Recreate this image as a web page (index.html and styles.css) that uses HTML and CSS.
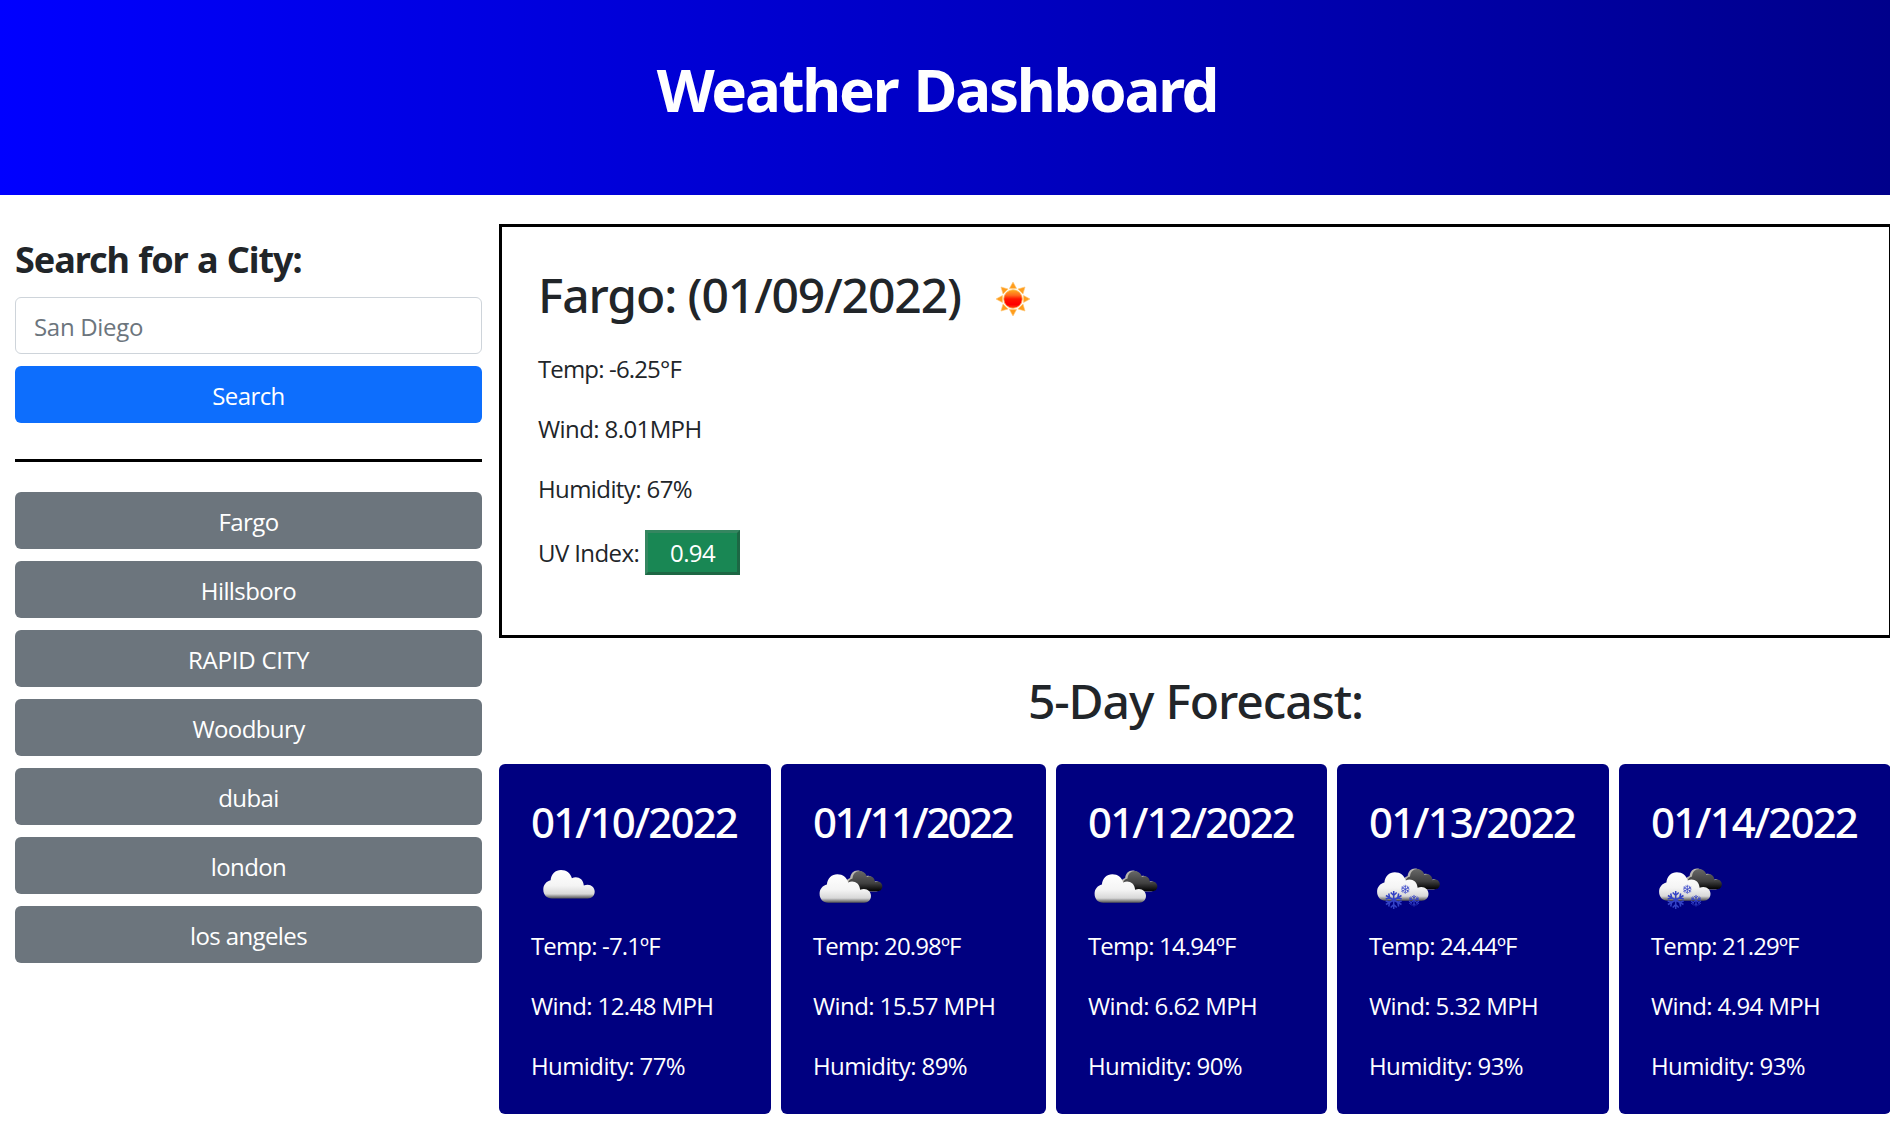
FILE: index.html
```html
<!DOCTYPE html>
<html lang="en">
<head>
<meta charset="utf-8">
<title>Weather Dashboard</title>
<link rel="stylesheet" href="styles.css">
</head>
<body>
<svg class="defs" width="0" height="0" aria-hidden="true">
  <defs>
    <linearGradient id="light" x1="0" y1="0" x2="0" y2="1">
      <stop offset="0" stop-color="#fff"/><stop offset=".55" stop-color="#f4f4f4"/><stop offset=".84" stop-color="#d8d8d8"/><stop offset=".93" stop-color="#8c8c8c"/><stop offset="1" stop-color="#555"/>
    </linearGradient>
    <linearGradient id="dark" x1="0" y1="0" x2="0" y2="1">
      <stop offset="0" stop-color="#686868"/><stop offset=".6" stop-color="#404040"/><stop offset="1" stop-color="#000"/>
    </linearGradient>
    <linearGradient id="disc" x1="0" y1="0" x2="0" y2="1">
      <stop offset="0" stop-color="#ffb020"/><stop offset=".3" stop-color="#ff6a1c"/><stop offset=".5" stop-color="#ff1500"/><stop offset=".8" stop-color="#f00"/><stop offset="1" stop-color="#ff4a10"/>
    </linearGradient>
    <path id="cloud" d="M21 48.5C15.500 48.500 12.300 44.800 12.300 39.600C12.300 34.500 15.500 31.400 19.600 30.300C20.200 24 24.500 20 30 20C35.600 20 39.700 23.500 40.900 28.200C45.500 25.600 52.500 28 52.800 35.600C58.800 33 63.700 37 63.700 41.500C63.700 45.500 61 48.500 56.800 48.500Z"/>
    <g id="flake" fill="none" stroke="#3342c6" stroke-width="1.500">
      <path d="M0-9V9M-7.800-4.500L7.800 4.500M-7.800 4.500L7.800-4.500M-3-7.500L0-4.500L3-7.500M-3 7.500L0 4.500L3 7.500M-8-1L-4-2.200L-5-6.500M8 1L4 2.200L5 6.500M8-1L4-2.200L5-6.500M-8 1L-4 2.200L-5 6.500"/>
    </g>
    <g id="cloudy">
      <use href="#cloud" fill="#b9b6b0" transform="translate(23.400 5.600) scale(.7 .74)"/>
      <use href="#cloud" fill="url(#dark)" transform="translate(26.300 6.900) scale(.675 .71)"/>
      <use href="#cloud" fill="url(#light)" transform="translate(-5.700 4.200)"/>
    </g>
  </defs>
</svg>

<header class="banner"><h1>Weather Dashboard</h1></header>

<div class="layout">
  <aside class="sidebar">
    <h2>Search for a City:</h2>
    <input class="field" type="text" placeholder="San Diego" aria-label="City">
    <button class="btn primary">Search</button>
    <hr>
    <div class="history">
      <button class="btn">Fargo</button>
      <button class="btn">Hillsboro</button>
      <button class="btn caps">RAPID CITY</button>
      <button class="btn">Woodbury</button>
      <button class="btn">dubai</button>
      <button class="btn">london</button>
      <button class="btn">los angeles</button>
    </div>
  </aside>

  <main class="main">
    <section class="current">
      <div class="place">
        <h2>Fargo: (01/09/2022)</h2>
        <svg class="sun" viewBox="-18 -18 36 36" aria-hidden="true">
          <g fill="#ff9d1c" stroke="#ffc878" stroke-width=".6">
            <path id="ray" d="M-3.600-10.500L0-17L3.600-10.500Z"/>
            <use href="#ray" transform="rotate(45)"/><use href="#ray" transform="rotate(90)"/><use href="#ray" transform="rotate(135)"/><use href="#ray" transform="rotate(180)"/><use href="#ray" transform="rotate(225)"/><use href="#ray" transform="rotate(270)"/><use href="#ray" transform="rotate(315)"/>
          </g>
          <circle r="9.300" fill="url(#disc)" stroke="#ffc060" stroke-width=".8"/>
        </svg>
      </div>
      <p class="temp">Temp: -6.25°F</p>
      <p class="wind">Wind: 8.01MPH</p>
      <p class="hum">Humidity: 67%</p>
      <p class="uv">UV Index: <span class="badge">0.94</span></p>
    </section>

    <h2 class="title">5-Day Forecast:</h2>

    <section class="cards">
      <article class="card">
        <h3>01/10/2022</h3>
        <svg class="icon" viewBox="0 0 75 75"><use href="#cloud" fill="url(#light)"/></svg>
        <p class="temp">Temp: -7.1ºF</p><p class="wind">Wind: 12.48 MPH</p><p class="hum">Humidity: 77%</p>
      </article>
      <article class="card">
        <h3 class="tight">01/11/2022</h3>
        <svg class="icon" viewBox="0 0 75 75"><use href="#cloudy"/></svg>
        <p class="temp">Temp: 20.98ºF</p><p class="wind">Wind: 15.57 MPH</p><p class="hum">Humidity: 89%</p>
      </article>
      <article class="card">
        <h3>01/12/2022</h3>
        <svg class="icon" viewBox="0 0 75 75"><use href="#cloudy"/></svg>
        <p class="temp">Temp: 14.94ºF</p><p class="wind">Wind: 6.62 MPH</p><p class="hum">Humidity: 90%</p>
      </article>
      <article class="card">
        <h3>01/13/2022</h3>
        <svg class="icon" viewBox="0 0 75 75"><g id="snow"><use href="#cloudy" transform="translate(1.500 -2)"/><use href="#flake" transform="translate(24.700 50)"/><use href="#flake" transform="translate(36.300 39.300) scale(.5)"/><use href="#flake" transform="translate(45 50.700) scale(.64)"/></g></svg>
        <p class="temp">Temp: 24.44ºF</p><p class="wind">Wind: 5.32 MPH</p><p class="hum">Humidity: 93%</p>
      </article>
      <article class="card">
        <h3>01/14/2022</h3>
        <svg class="icon" viewBox="0 0 75 75"><use href="#snow"/></svg>
        <p class="temp">Temp: 21.29ºF</p><p class="wind">Wind: 4.94 MPH</p><p class="hum">Humidity: 93%</p>
      </article>
    </section>
  </main>
</div>
</body>
</html>
```
FILE: styles.css
```css
* { box-sizing: border-box; }
body {
  margin: 0;
  overflow: hidden;
  background: #fff;
  color: #212529;
  font: 400 24px/36px "Open Sans", "Noto Sans", sans-serif;
}
h1, h2, h3, p { margin: 0; }
.defs { position: absolute; }

.banner {
  height: 195px;
  padding: 53px 16px 0 0;
  background: linear-gradient(to right, #00f, #00008b);
  color: #fff;
  text-align: center;
}
.banner h1 {
  font: 700 60px/72px "Noto Sans", sans-serif;
  letter-spacing: -2.250px;
  word-spacing: 3px;
}

.layout { display: flex; }
.sidebar {
  display: flex;
  flex-direction: column;
  width: 499px;
  padding: 43px 17px 0 15px;
}
.sidebar h2 {
  margin-bottom: 16px;
  font: 700 36px/43px "Noto Sans", sans-serif;
  letter-spacing: -1.050px;
  word-spacing: 1px;
}
.field, .btn {
  width: 467px;
  height: 57px;
  border-radius: 6px;
  font: inherit;
}
.field {
  padding: 2px 18px 0;
  border: 1px solid #ced4da;
  letter-spacing: -.3px;
}
.field::placeholder { color: #6c757d; opacity: 1; }
.btn {
  padding: 2px 0 0;
  border: 0;
  background: #6c757d;
  color: #fff;
  letter-spacing: -.6px;
}
.caps { letter-spacing: -.2px; }
.primary { margin-top: 12px; background: #0d6efd; }
hr {
  width: 467px;
  height: 3px;
  margin: 36px 0 30px;
  border: 0;
  background: #000;
}
.history { display: flex; flex-direction: column; gap: 12px; }

.main { flex: none; width: 1393px; padding-top: 29px; }
.current {
  height: 414px;
  padding: 39px 36px;
  border: 3px solid #000;
}
.place {
  display: flex;
  align-items: flex-start;
  height: 58px;
  margin-bottom: 27px;
}
.place h2, .title {
  font: 500 48px/58px "Noto Sans", sans-serif;
  letter-spacing: -1.100px;
}
.sun { width: 36px; height: 36px; margin: 15px 0 0 34px; }
.title { margin: 34px 0 34px; text-align: center; letter-spacing: -1.100px; word-spacing: 1px; }

p { margin-bottom: 24px; }
.temp { letter-spacing: -.850px; }
.wind { letter-spacing: -.6px; }
.hum { letter-spacing: -.6px; }
.current .hum { margin-bottom: 23px; }
.uv {
  display: flex;
  align-items: baseline;
  gap: 6px;
  letter-spacing: -.6px;
}
.badge {
  width: 95px;
  border: 3px solid;
  border-color: #358660 #1d6744 #1d6744 #358660;
  background: #198754;
  color: #fff;
  line-height: 39px;
  text-align: center;
}

.cards {
  display: grid;
  grid-template-columns: 272px 265px 271px 272px 272px;
  gap: 10px;
}
.card {
  height: 350px;
  padding: 33px 32px 0;
  border-radius: 6px;
  background: #000080;
  color: #fff;
}
.card h3 {
  font: 500 42px/50px "Noto Sans", sans-serif;
  letter-spacing: -1.850px;
  white-space: nowrap;
}
.card .tight { letter-spacing: -2.550px; }
.icon { display: block; width: 75px; height: 75px; margin: 3px 0; }
```
